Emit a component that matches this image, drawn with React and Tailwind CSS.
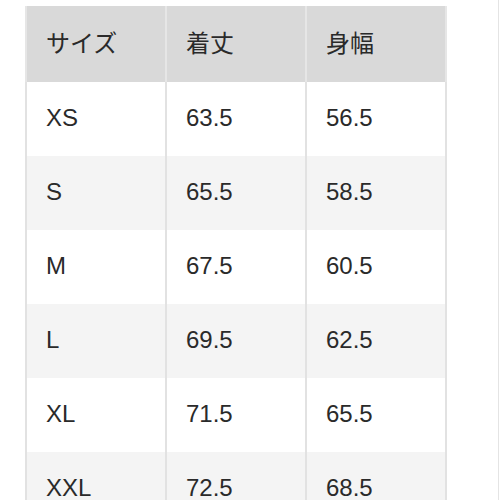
const rows = [
  ['XS', '63.5', '56.5'],
  ['S', '65.5', '58.5'],
  ['M', '67.5', '60.5'],
  ['L', '69.5', '62.5'],
  ['XL', '71.5', '65.5'],
  ['XXL', '72.5', '68.5'],
];

export default function App() {
  return (
    <div className="w-[500px] h-[500px] overflow-hidden bg-white" style={{ fontFamily: '"Liberation Sans", "Noto Sans CJK JP", sans-serif' }}>
      <div className="w-[499px] h-full border-r border-[#e4e4e4] pt-[6px] pl-[25px]">
        <table className="border-collapse text-[24px] text-[#2a2a2a]">
          <thead>
            <tr className="bg-[#d9d9d9] h-[76px]">
              {['サイズ', '着丈', '身幅'].map((h, i) => (
                <th key={i} className="w-[140px] border-x-2 border-[#e6e6e6] text-left font-normal pl-[19px] align-middle">{h}</th>
              ))}
            </tr>
          </thead>
          <tbody>
            {rows.map((r, i) => (
              <tr key={i} className={`h-[74px] ${i % 2 === 1 ? 'bg-[#f4f4f4]' : 'bg-white'}`}>
                {r.map((c, j) => (
                  <td key={j} className="w-[140px] border-x-2 border-[#e2e2e2] pl-[19px] pb-[2px] align-middle">{c}</td>
                ))}
              </tr>
            ))}
          </tbody>
        </table>
      </div>
    </div>
  );
}
